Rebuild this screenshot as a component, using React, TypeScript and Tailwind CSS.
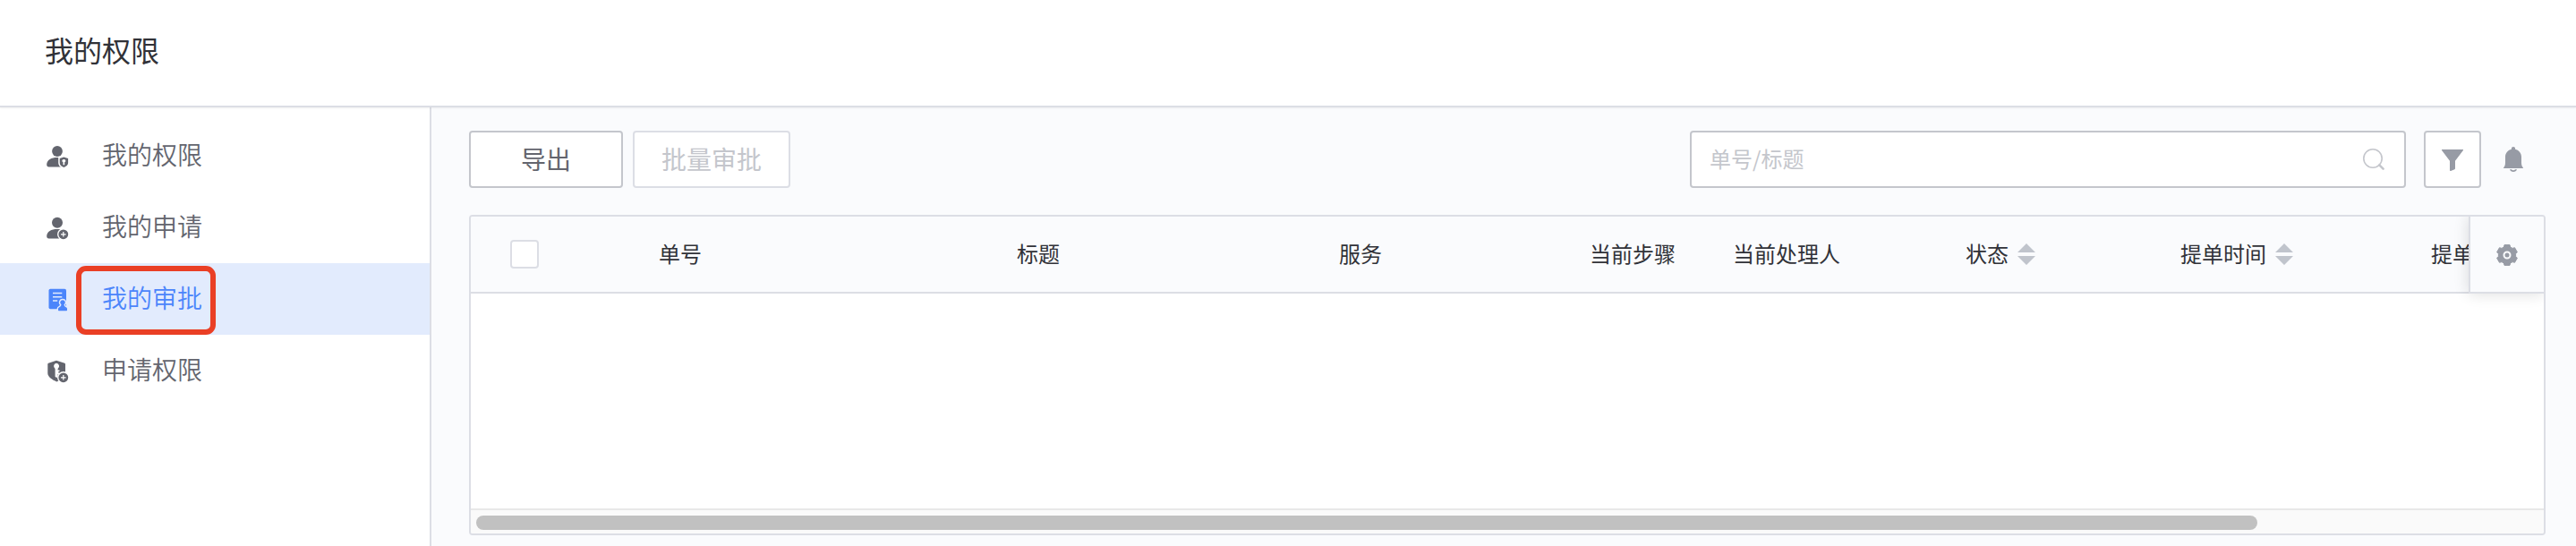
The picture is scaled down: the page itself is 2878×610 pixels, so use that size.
import type { ReactNode } from "react";

function PlusBadge() {
  return (
    <>
      <circle cx="20.8" cy="21.8" r="6.8" fill="#fff" />
      <circle cx="20.8" cy="21.8" r="5.4" />
      <path d="M20.8 19v5.600M18 21.800h5.600" stroke="#fff" strokeWidth="1.2" />
    </>
  );
}

function MenuIcon({ children }: { children: ReactNode }) {
  return (
    <svg viewBox="0 0 28 28" className="size-7 shrink-0" fill="currentColor" aria-hidden="true">
      {children}
    </svg>
  );
}

const userBody = "M2.2 23.8C2.4 18.6 7.2 16 14 16c6.5 0 10 2.5 10 8v2.4H4.600c-1.600 0-2.500-1-2.400-2.600Z";
const smallShield = "M21.300 15.600l4.800 1.400v5c0 2.300-2 3.800-4.800 4.900-2.800-1.100-4.600-2.600-4.600-4.900v-5Z";

function MyPermissionIcon() {
  return (
    <MenuIcon>
      <circle cx="14" cy="9" r="5.9" />
      <path d={userBody} />
      <path d={smallShield} stroke="#fff" strokeWidth="3" />
      <path d={smallShield} />
      <path d="M21.300 18a2 2 0 0 1 1.900 2.500l-1 .8v2.900h-1.700v-2.900l-1-.8a2 2 0 0 1 1.800-2.500Z" fill="#fff" />
    </MenuIcon>
  );
}

function MyRequestIcon() {
  return (
    <MenuIcon>
      <circle cx="14" cy="8.7" r="6" />
      <path d={userBody} />
      <PlusBadge />
    </MenuIcon>
  );
}

const stamp =
  "M20 15.200a2.700 2.700 0 0 1 1.500 5c.2 1.300.9 2.600 2.200 3.100.8.300 1.300.8 1.300 1.700v1.600c0 .4-.3.700-.7.700h-8.600c-.4 0-.7-.3-.7-.7V25c0-.9.600-1.400 1.300-1.700 1.300-.5 2-1.800 2.200-3.100a2.700 2.700 0 0 1 1.500-5Z";

function MyApprovalIcon() {
  return (
    <MenuIcon>
      <rect x="4.500" y="2.800" width="19.500" height="22.500" rx="1.800" />
      <path d="M9 7.600h10.300M9 11.800h10.300M9 16h5.200" stroke="#e2ebfd" strokeWidth="1.500" />
      <path d={stamp} stroke="#e2ebfd" strokeWidth="2.800" />
      <path d={stamp} />
    </MenuIcon>
  );
}

function ApplyPermissionIcon() {
  return (
    <MenuIcon>
      <path d="M13 2.700l9.300 3.100c.4.200.7.500.7 1V17c0 4-5 7.500-9.600 9.400C8.400 24.400 3.300 21 3.300 17V6.800c0-.5.300-.8.700-1Z" />
      <path d="M13 5.700a3.400 3.400 0 0 1 1.600 6.200v1.500h1.900v1.500h-1.200v1.500h1.200v1.500h-1.900v2.800l-1.400 1.300-1.600-1.300v-8.800A3.400 3.400 0 0 1 13 5.700Z" fill="#fff" />
      <PlusBadge />
    </MenuIcon>
  );
}

const menu = [
  { label: "我的权限", icon: <MyPermissionIcon /> },
  { label: "我的申请", icon: <MyRequestIcon /> },
  { label: "我的审批", icon: <MyApprovalIcon />, active: true },
  { label: "申请权限", icon: <ApplyPermissionIcon /> },
];

const columns = [
  { label: "单号", width: "w-[400px]" },
  { label: "标题", width: "w-[360px]" },
  { label: "服务", width: "w-[280px]" },
  { label: "当前步骤", width: "w-[160px]" },
  { label: "当前处理人", width: "w-[260px]" },
  { label: "状态", width: "w-[240px]", sortable: true },
  { label: "提单时间", width: "w-[280px]", sortable: true },
  { label: "提单人", width: "w-[520px]" },
];

function SortArrows() {
  return (
    <svg viewBox="0 0 20 24" className="h-6 w-5" fill="#c0c4cc" aria-hidden="true">
      <path d="M10 0l10 10H0ZM0 14h20L10 24Z" />
    </svg>
  );
}

export default function App() {
  return (
    <div className="flex min-h-screen flex-col bg-white font-['Noto_Sans_CJK_SC',sans-serif] text-[#313238]">
      <header className="relative z-10 flex h-[120px] items-center border-b-2 border-[#dcdee5] bg-white px-[50px] pb-2 shadow-[0_1px_2px_rgba(0,0,0,0.06)]">
        <h1 className="text-[32px] leading-10 font-normal">我的权限</h1>
      </header>

      <div className="flex flex-1">
        <nav className="w-[482px] shrink-0 border-r-2 border-[#dcdee5] pt-3.5">
          <ul>
            {menu.map((item) => (
              <li key={item.label} className="relative">
                <a
                  href="#"
                  aria-current={item.active ? "page" : undefined}
                  className={
                    item.active
                      ? "flex h-20 items-center gap-9 bg-[#e2ebfd] pl-[50px] text-[28px] leading-10 font-[350] text-[#4b85fb]"
                      : "flex h-20 items-center gap-9 pl-[50px] text-[28px] leading-10 font-[350] text-[#63656e]"
                  }
                >
                  {item.icon}
                  <span className="pb-1">{item.label}</span>
                </a>
                {item.active && (
                  <div className="pointer-events-none absolute top-[3px] left-[85px] h-[77px] w-[156px] rounded-[11px] border-6 border-[#ea3f25]" />
                )}
              </li>
            ))}
          </ul>
        </nav>

        <main className="flex min-w-0 flex-1 flex-col bg-[#fafbfd] pt-[26px] pr-[34px] pb-3 pl-[42px]">
          <div className="flex items-center">
            <button
              type="button"
              className="h-16 w-[172px] rounded-sm border-2 border-[#c4c6cc] bg-white pb-0.5 text-[28px] leading-10 text-[#63656e]"
            >
              导出
            </button>
            <button
              type="button"
              disabled
              className="ml-[11px] h-16 w-[176px] rounded-sm border-2 border-[#dcdee5] bg-white pb-0.5 text-[28px] leading-10 text-[#c4c6cc]"
            >
              批量审批
            </button>

            <label className="ml-auto flex h-16 w-[800px] items-center rounded-sm border-2 border-[#c4c6cc] bg-white pr-[22px] pl-5">
              <input
                type="text"
                aria-label="单号/标题"
                placeholder="单号/标题"
                className="min-w-0 flex-1 pb-0.5 text-2xl outline-none placeholder:text-[#c4c6cc]"
              />
              <svg viewBox="0 0 24 24" className="size-6" fill="none" stroke="#c4c6cc" aria-hidden="true">
                <circle cx="11" cy="11" r="10.2" strokeWidth="1.6" />
                <path d="M18.300 18.300l4.300 4.300" strokeWidth="2.6" strokeLinecap="round" />
              </svg>
            </label>

            <button
              type="button"
              aria-label="筛选"
              className="ml-5 flex size-16 items-center justify-center rounded-sm border-2 border-[#c4c6cc] bg-white pt-0.5"
            >
              <svg viewBox="0 0 24 24" className="size-6" fill="#979ba5" aria-hidden="true">
                <path d="M.6 0h22.800c.6 0 .8.500.5 1L15 12.800v8.400c0 .5-.2.800-.6 1l-4.300 1.700c-.6.200-1.100 0-1.100-.6V12.800L.1 1C-.2.500 0 0 .6 0Z" />
              </svg>
            </button>
            <button type="button" aria-label="通知" className="flex h-16 w-[72px] items-center justify-center">
              <svg viewBox="0 0 22 28" className="h-7 w-[22px]" fill="#979ba5" aria-hidden="true">
                <path d="M11 0c1.200 0 2.100.9 2.100 2.100v.6C17 3.600 20 7 20 11.200v6.200c0 2.600.5 4.300 1.700 5.600.5.500.3 1.100-.4 1.100H.7c-.7 0-.9-.6-.4-1.100C1.500 21.700 2 20 2 17.400v-6.200C2 7 5 3.600 8.900 2.700v-.6C8.900.9 9.800 0 11 0Z" />
                <path d="M7 25.200h2c.4.600 1.100 1 2 1s1.600-.4 2-1h2C14.400 27 13 28 11 28s-3.400-1-4-2.800Z" />
              </svg>
            </button>
          </div>

          <div className="relative mt-[30px] flex flex-1 flex-col overflow-hidden rounded-sm border-2 border-[#dcdee5] bg-white">
            <div className="min-h-[326px] flex-1 overflow-hidden">
              <table className="w-[2680px] table-fixed border-separate border-spacing-0 text-left text-2xl">
                <thead>
                  <tr className="h-[86px] bg-[#fafbfd]">
                    <th className="w-[180px] border-b-2 border-[#dcdee5] pl-11">
                      <input
                        type="checkbox"
                        aria-label="全选"
                        className="block size-8 appearance-none rounded-sm border-2 border-[#dcdee5] bg-white"
                      />
                    </th>
                    {columns.map((column) => (
                      <th
                        key={column.label}
                        className={`${column.width} border-b-2 border-[#dcdee5] pl-[30px] font-normal whitespace-nowrap`}
                      >
                        {column.sortable ? (
                          <button type="button" className="flex items-center gap-2.5">
                            <span className="pb-0.5">{column.label}</span>
                            <SortArrows />
                          </button>
                        ) : (
                          <div className="pb-0.5">{column.label}</div>
                        )}
                      </th>
                    ))}
                  </tr>
                </thead>
              </table>
            </div>

            <button
              type="button"
              aria-label="表格设置"
              className="absolute top-0 right-0 flex h-[86px] w-[84px] items-center justify-center border-b-2 border-l-2 border-[#dcdee5] bg-[#fafbfd] pt-0.5 shadow-[0_0_16px_rgba(0,0,0,0.14)]"
            >
              <svg viewBox="0 0 24 24" className="size-6" aria-hidden="true">
                <path
                  d="M9 .6L15 .6L15.600 3L18 4.400L20.500 3.700L23.400 8.700L21.600 10.600L21.600 13.400L23.400 15.300L20.500 20.300L18 19.600L15.600 21L15 23.400L9 23.400L8.400 21L6 19.600L3.500 20.300L.6 15.300L2.400 13.400L2.400 10.600L.6 8.700L3.500 3.700L6 4.400L8.400 3Z"
                  fill="#979ba5"
                  stroke="#979ba5"
                  strokeLinejoin="round"
                />
                <circle cx="12" cy="12" r="3.500" fill="none" stroke="#fafbfd" strokeWidth="2" />
              </svg>
            </button>

            <div className="h-7 border-t-2 border-[#e8e8e8] bg-[#fafafa] pt-1.5 pl-1.5">
              <div className="h-4 w-[calc(100%-320px)] rounded-full bg-[#c1c1c1]" />
            </div>
          </div>
        </main>
      </div>
    </div>
  );
}
